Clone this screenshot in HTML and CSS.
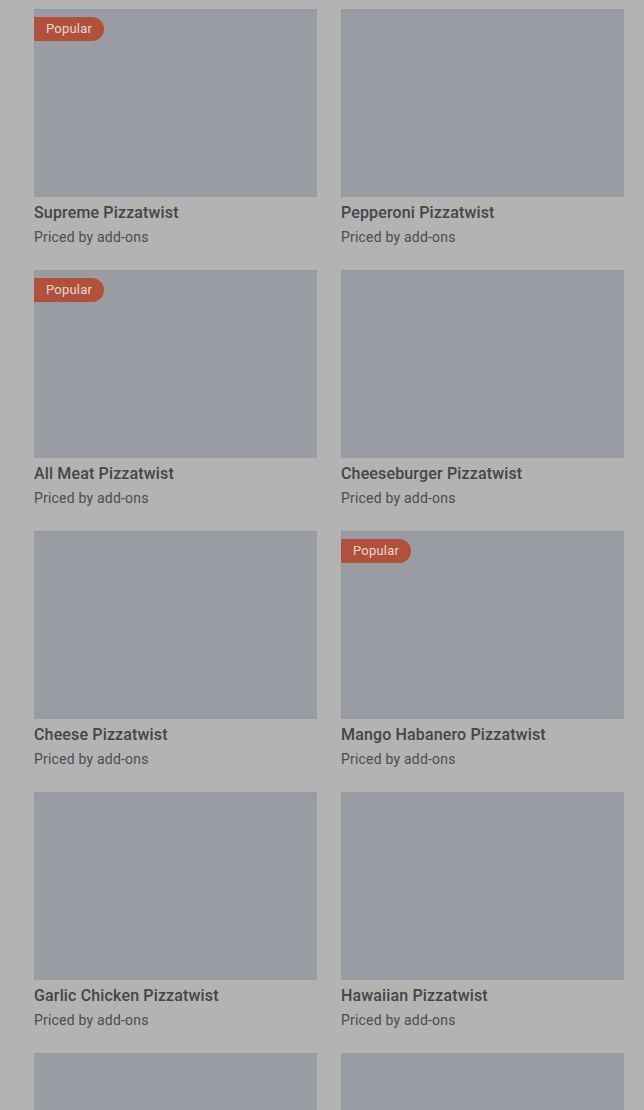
FILE: index.html
```html
<!DOCTYPE html>
<html lang="en">
<head>
    <meta charset="UTF-8">
    <meta name="viewport" content="width=device-width, initial-scale=1.0">
    <title>Pizzatwists</title>
    <link rel="stylesheet" href="styles.css">
</head>
<body>
    <div class="overlay">
        <div class="menu-grid">
            <div class="item">
                <div class="item-photo"><span class="badge">Popular</span></div>
                <div class="item-name">Supreme Pizzatwist</div>
                <div class="item-price">Priced by add-ons</div>
            </div>
            <div class="item">
                <div class="item-photo"></div>
                <div class="item-name">Pepperoni Pizzatwist</div>
                <div class="item-price">Priced by add-ons</div>
            </div>
            <div class="item">
                <div class="item-photo"><span class="badge">Popular</span></div>
                <div class="item-name">All Meat Pizzatwist</div>
                <div class="item-price">Priced by add-ons</div>
            </div>
            <div class="item">
                <div class="item-photo"></div>
                <div class="item-name">Cheeseburger Pizzatwist</div>
                <div class="item-price">Priced by add-ons</div>
            </div>
            <div class="item">
                <div class="item-photo"></div>
                <div class="item-name">Cheese Pizzatwist</div>
                <div class="item-price">Priced by add-ons</div>
            </div>
            <div class="item">
                <div class="item-photo"><span class="badge">Popular</span></div>
                <div class="item-name">Mango Habanero Pizzatwist</div>
                <div class="item-price">Priced by add-ons</div>
            </div>
            <div class="item">
                <div class="item-photo"></div>
                <div class="item-name">Garlic Chicken Pizzatwist</div>
                <div class="item-price">Priced by add-ons</div>
            </div>
            <div class="item">
                <div class="item-photo"></div>
                <div class="item-name">Hawaiian Pizzatwist</div>
                <div class="item-price">Priced by add-ons</div>
            </div>
            <!-- siguiente fila, solo asoma la foto -->
            <div class="item">
                <div class="item-photo"></div>
            </div>
            <div class="item">
                <div class="item-photo"></div>
            </div>
        </div>
    </div>
</body>
</html>
```

FILE: styles.css
```css
body {
    margin: 0;
    padding: 0;
    background-color: #b3b3b3;
    font-family: Roboto, "Noto Sans", Arial, sans-serif;
    overflow: hidden;
    height: 1110px;
}

.overlay {
    padding: 9px 20px 0 34px;
}

.menu-grid {
    display: grid;
    grid-template-columns: 283px 283px;
    column-gap: 24px;
    row-gap: 23px;
}

.item-photo {
    position: relative;
    height: 188px;
    background-color: #9a9ca3;
    box-shadow: inset 1px 1px 0 #95979d;
}

.badge {
    position: absolute;
    top: 8px;
    left: 0;
    height: 24px;
    line-height: 24px;
    padding: 0 12px 0 12px;
    background-color: #b2513b;
    color: #e8d8d3;
    font-size: 13px;
    letter-spacing: 0.2px;
    border-radius: 0 12px 12px 0;
}

.item-name {
    margin-top: 6px;
    line-height: 20px;
    font-size: 16px;
    font-weight: 500;
    letter-spacing: 0.15px;
    color: #454545;
}

.item-price {
    line-height: 20px;
    margin-top: 4px;
    font-size: 14px;
    letter-spacing: 0.2px;
    color: #4c4c4c;
}
```
